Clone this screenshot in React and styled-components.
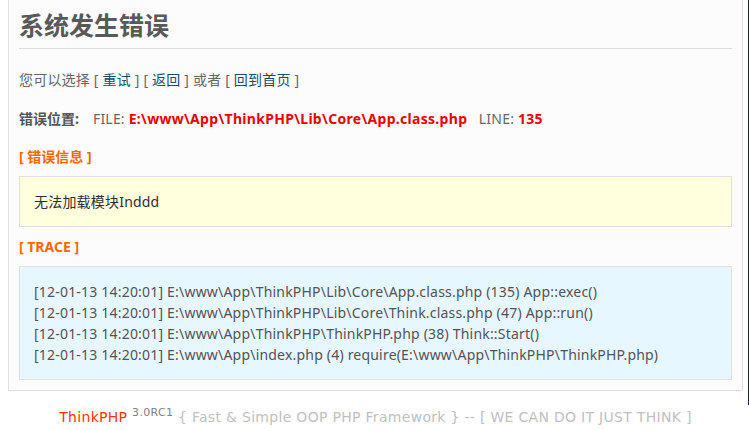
import styled, { createGlobalStyle } from "styled-components";

const GlobalStyle = createGlobalStyle`
  html, body {
    margin: 0;
    padding: 0;
    background: #fff;
  }
  body {
    font-family: "Noto Sans", "Noto Sans CJK SC", sans-serif;
    font-size: 14px;
  }
`;

const Page = styled.div`
  display: flex;
  align-items: flex-start;
  width: 749px;
  height: 430px;
  overflow: hidden;
`;

const Main = styled.div`
  flex: 1;
  padding-left: 8px;
`;

const Edge = styled.div`
  width: 2px;
  height: 405px;
  margin-left: 5px;
  background: #14253d;
`;

const Notice = styled.div`
  width: 713px;
  padding: 0 10px 10px;
  background: #fcfcfc;
  border: 1px solid #e0e0e0;
  border-top: none;
  color: #666;
`;

const Heading = styled.h2`
  margin: 0;
  padding: 10px 0 8px;
  font-size: 25px;
  line-height: 30px;
  font-weight: bold;
  color: #595959;
  border-bottom: 1px solid #ddd;
`;

const Line = styled.p`
  margin: ${({ $top }) => $top}px 0 0;
  line-height: 19px;
  color: #666;
  letter-spacing: 0.2px;
`;

const Link = styled.a`
  text-decoration: none;
  color: #174b73;
`;

const Label = styled.b`
  color: #555;
  margin-right: 14px;
  letter-spacing: 0;
`;

const Red = styled.b`
  color: #e00;
  letter-spacing: 0.3px;
`;

const Title = styled.div`
  margin-top: ${({ $top }) => $top}px;
  line-height: 19px;
  color: #f60;
  font-weight: bold;
`;

const Box = styled.div`
  margin-top: 10px;
  padding: 14px;
  line-height: 21px;
  letter-spacing: 0.2px;
  border: 1px solid #e0e0e0;
  background: ${({ $bg }) => $bg};
  color: ${({ $color }) => $color};
`;

const Footer = styled.div`
  margin-top: 15px;
  text-align: center;
  font-family: "DejaVu Sans", Verdana, sans-serif;
  font-size: 14px;
  letter-spacing: 0.3px;
  color: #ff3300;
`;

const Version = styled.sup`
  color: gray;
  font-size: 11px;
`;

const Slogan = styled.span`
  color: silver;
`;

const trace = [
  "[12-01-13 14:20:01] E:\\www\\App\\ThinkPHP\\Lib\\Core\\App.class.php (135) App::exec()",
  "[12-01-13 14:20:01] E:\\www\\App\\ThinkPHP\\Lib\\Core\\Think.class.php (47) App::run()",
  "[12-01-13 14:20:01] E:\\www\\App\\ThinkPHP\\ThinkPHP.php (38) Think::Start()",
  "[12-01-13 14:20:01] E:\\www\\App\\index.php (4) require(E:\\www\\App\\ThinkPHP\\ThinkPHP.php)",
];

export default function App() {
  return (
    <>
      <GlobalStyle />
      <Page>
        <Main>
          <Notice>
            <Heading>系统发生错误</Heading>
            <Line $top={21}>
              您可以选择 [ <Link href="#">重试</Link> ] [ <Link href="#">返回</Link> ] 或者 [{" "}
              <Link href="#">回到首页</Link> ]
            </Line>
            <Line $top={20}>
              <Label>错误位置:</Label>FILE: <Red>E:\www\App\ThinkPHP\Lib\Core\App.class.php</Red>
              &nbsp;&nbsp;&nbsp;LINE: <Red>135</Red>
            </Line>
            <Title $top={19}>[ 错误信息 ]</Title>
            <Box $bg="#ffd" $color="#2e2e2e">
              无法加载模块Inddd
            </Box>
            <Title $top={10}>[ TRACE ]</Title>
            <Box $bg="#e7f7ff" $color="#535353">
              {trace.map((t) => (
                <div key={t}>{t}</div>
              ))}
            </Box>
          </Notice>
          <Footer>
            ThinkPHP <Version>3.0RC1</Version>
            <Slogan> {"{"} Fast &amp; Simple OOP PHP Framework {"}"} -- [ WE CAN DO IT JUST THINK ]</Slogan>
          </Footer>
        </Main>
        <Edge />
      </Page>
    </>
  );
}
